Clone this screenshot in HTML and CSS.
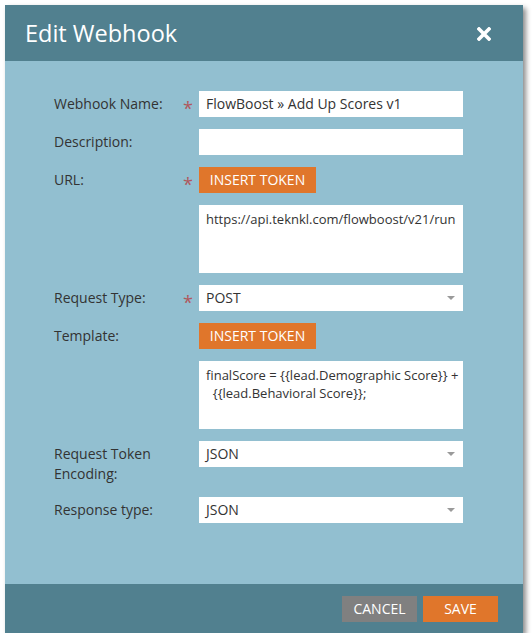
FILE: index.html
```html
<!DOCTYPE html>
<html>
<head>
<meta charset="utf-8">
<link rel="stylesheet" href="styles.css">
</head>
<body>
<div class="dialog">
  <div class="header">
    <div class="title">Edit Webhook</div>
    <svg class="close" width="14" height="14" viewBox="0 0 14 14"><path d="M2 2 L12 12 M12 2 L2 12" stroke="#fff" stroke-width="3.6" stroke-linecap="square"/></svg>
  </div>
  <div class="body">
    <div class="row">
      <div class="label">Webhook Name:</div>
      <div class="req">*</div>
      <div class="input">FlowBoost » Add Up Scores v1</div>
    </div>
    <div class="row">
      <div class="label">Description:</div>
      <div class="req"></div>
      <div class="input"></div>
    </div>
    <div class="row">
      <div class="label">URL:</div>
      <div class="req">*</div>
      <div class="token">INSERT TOKEN</div>
    </div>
    <div class="row">
      <div class="label"></div>
      <div class="req"></div>
      <div class="area">https://api.teknkl.com/flowboost/v21/run</div>
    </div>
    <div class="row">
      <div class="label">Request Type:</div>
      <div class="req">*</div>
      <div class="input select">POST<span class="arrow"></span></div>
    </div>
    <div class="row">
      <div class="label">Template:</div>
      <div class="req"></div>
      <div class="token">INSERT TOKEN</div>
    </div>
    <div class="row">
      <div class="label"></div>
      <div class="req"></div>
      <div class="area">finalScore = {{lead.Demographic Score}} +
  {{lead.Behavioral Score}};</div>
    </div>
    <div class="row">
      <div class="label two">Request Token<br>Encoding:</div>
      <div class="req"></div>
      <div class="input select">JSON<span class="arrow"></span></div>
    </div>
    <div class="row">
      <div class="label">Response type:</div>
      <div class="req"></div>
      <div class="input select">JSON<span class="arrow"></span></div>
    </div>
  </div>
  <div class="footer">
    <div class="btn cancel">CANCEL</div>
    <div class="btn save">SAVE</div>
  </div>
</div>
</body>
</html>
```

FILE: styles.css
```css
html, body {
  margin: 0;
  padding: 0;
  background: #ffffff;
}
body {
  font-family: "Open Sans", "Noto Sans", sans-serif;
  font-size: 14px;
  color: #333333;
}
.dialog {
  margin: 5px 0 0 5px;
  width: 518px;
  height: 628px;
  background: #92bfd0;
  display: flex;
  flex-direction: column;
  box-shadow: 3px 3px 5px rgba(0, 0, 0, 0.45);
}
.header {
  height: 56px;
  background: #51808f;
  display: flex;
  align-items: center;
  justify-content: space-between;
  padding: 0 32px 0 20px;
}
.title {
  color: #ffffff;
  font-size: 23.5px;
  line-height: 56px;
}
.close {
  display: block;
  margin-top: 1px;
}
.body {
  flex: 1;
  padding: 30px 0 0 49px;
  display: flex;
  flex-direction: column;
  gap: 12px;
}
.row {
  display: flex;
  align-items: flex-start;
}
.label {
  width: 129px;
  line-height: 26px;
  color: #333333;
}
.label.two {
  line-height: 20px;
  padding: 3px 0 1px;
}
.req {
  width: 16px;
  height: 26px;
  color: #b0585d;
  font-size: 18px;
  line-height: 34px;
}
.input {
  position: relative;
  width: 257px;
  height: 26px;
  line-height: 26px;
  background: #ffffff;
  padding-left: 7px;
  color: #333333;
}
.arrow {
  position: absolute;
  right: 8px;
  top: 11px;
  width: 0;
  height: 0;
  border-left: 4px solid transparent;
  border-right: 4px solid transparent;
  border-top: 4px solid #9a9a9a;
}
.token {
  height: 26px;
  line-height: 26px;
  width: 117px;
  background: #e0762b;
  color: #ffffff;
  text-align: center;
}
.area {
  width: 257px;
  height: 63px;
  background: #ffffff;
  padding: 5px 0 0 7px;
  line-height: 18px;
  white-space: pre-wrap;
  color: #333333;
  font-size: 13px;
}
.footer {
  height: 49px;
  background: #51808f;
  display: flex;
  justify-content: flex-end;
  align-items: flex-start;
  padding: 12px 25px 0 0;
  box-sizing: border-box;
  gap: 6px;
}
.btn {
  width: 75px;
  height: 26px;
  line-height: 26px;
  text-align: center;
  color: #ffffff;
}
.cancel {
  background: #808080;
}
.save {
  background: #e0762b;
}
```
